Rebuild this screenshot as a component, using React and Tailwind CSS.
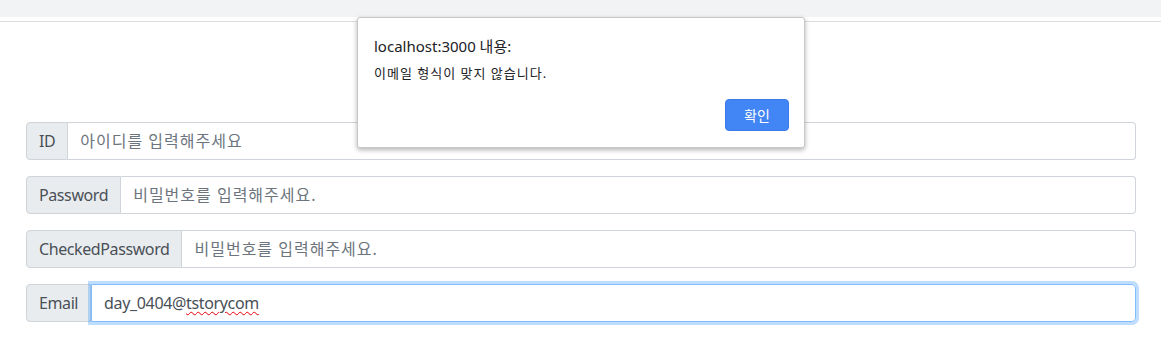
import React from 'react';

const font = { fontFamily: '"Noto Sans", "Noto Sans CJK KR", sans-serif' };

function InputRow({ label, placeholder }) {
  return (
    <div className="flex h-[38px] w-full">
      <span className="flex items-center px-3 bg-[#e9ecef] border border-[#ced4da] rounded-l-[4px] text-[16px] tracking-[-0.4px] text-[#495057] whitespace-nowrap">
        {label}
      </span>
      <input
        className="flex-1 min-w-0 px-3 border border-l-0 border-[#ced4da] rounded-r-[4px] text-[16px] tracking-[1px] text-[#495057] placeholder:text-[#6c757d] outline-none bg-white"
        placeholder={placeholder}
        style={font}
      />
    </div>
  );
}

function App() {
  return (
    <div className="relative w-[1161px] h-[362px] bg-white overflow-hidden" style={font}>
      <div className="h-[17px] bg-[#f1f3f4]"></div>
      <div className="h-[4px]"></div>
      <div className="border-t border-[#dadce0]"></div>

      {/* form */}
      <div className="flex flex-col gap-4 px-[26px] pt-[100px] pr-[25px]">
        <InputRow label="ID" placeholder="아이디를 입력해주세요" />
        <InputRow label="Password" placeholder="비밀번호를 입력해주세요." />
        <InputRow label="CheckedPassword" placeholder="비밀번호를 입력해주세요." />
        <div className="flex h-[38px] w-full">
          <span className="flex items-center px-3 bg-[#e9ecef] border border-[#ced4da] rounded-l-[4px] text-[16px] tracking-[-0.4px] text-[#495057]">
            Email
          </span>
          <div className="flex-1 flex items-center px-3 border border-[#80bdff] rounded-r-[4px] text-[16px] tracking-[-0.35px] text-[#495057] shadow-[0_0_0_3px_rgba(0,123,255,0.25)] relative z-10">
            day_0404@<span className="underline decoration-wavy decoration-red-600 decoration-1 underline-offset-2">tstorycom</span>
          </div>
        </div>
      </div>

      {/* alert dialog */}
      <div className="absolute left-[357px] top-[17px] w-[448px] h-[131px] bg-white border border-[#c8c8c8] rounded-[3px] shadow-[0_2px_5px_rgba(0,0,0,0.3)] z-20">
        <div className="pl-[16px] pt-[18px] text-[15px] text-[#202124] leading-5">localhost:3000 내용:</div>
        <div className="pl-[16px] pt-[9px] text-[13px] tracking-[1px] text-[#202124] leading-4">이메일 형식이 맞지 않습니다.</div>
        <div className="flex justify-end pr-[15px] pt-[18px]">
          <button className="w-[64px] h-[32px] bg-[#4285f4] text-white text-[14px] rounded-[4px] border border-[#3b7be8]">확인</button>
        </div>
      </div>
    </div>
  );
}

export default App;
